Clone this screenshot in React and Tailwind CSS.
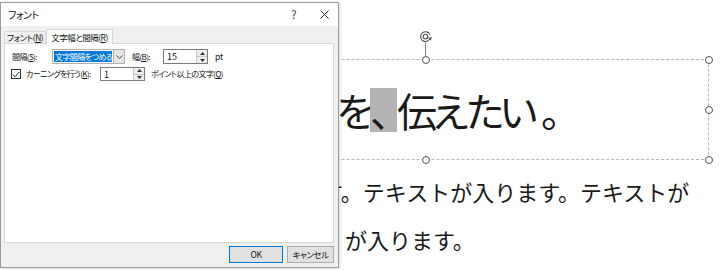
import React from "react";

const jp = "font-['Noto_Sans_CJK_JP','Noto_Sans',sans-serif]";

const Spin = () => (
  <div className="flex flex-col w-[11px] h-full border-l border-[#c8c8c8]">
    <div className="flex-1 flex items-center justify-center bg-[#eeeeee] border-b border-[#c8c8c8]">
      <svg width="5" height="3" viewBox="0 0 5 3">
        <path d="M0 3 L2.5 0 L5 3 Z" fill="#333" />
      </svg>
    </div>
    <div className="flex-1 flex items-center justify-center bg-[#eeeeee]">
      <svg width="5" height="3" viewBox="0 0 5 3">
        <path d="M0 0 L5 0 L2.5 3 Z" fill="#333" />
      </svg>
    </div>
  </div>
);

const Handle = ({ className }) => (
  <div
    className={
      "absolute w-[8px] h-[8px] rounded-full border border-[#505050] bg-white " +
      className
    }
  />
);

const FontDialog = () => (
  <div
    className={
      "absolute left-0 top-[2px] z-10 w-[339px] h-[266px] flex flex-col bg-[#f0f0f0] border border-[#9a9a9a] shadow-[1px_1px_3px_rgba(0,0,0,0.15)] text-[#111] whitespace-nowrap tracking-[-0.5px] [font-feature-settings:'palt'] " +
      jp
    }
  >
    {/* title bar */}
    <div className="h-[23px] bg-white flex items-center pl-[7px] pr-[9px]">
      <span className="text-[10px]">フォント</span>
      <span className="ml-auto text-[11px] text-[#333] mr-[24px]">?</span>
      <svg width="9" height="9" viewBox="0 0 9 9" stroke="#333" strokeWidth="1">
        <path d="M0.5 0.5 L8.5 8.5 M8.5 0.5 L0.5 8.5" />
      </svg>
    </div>

    {/* tabs */}
    <div className="flex items-end h-[17px] pl-[3px] text-[8.5px] leading-none">
      <div className="h-[12px] px-[2px] flex items-center border border-b-0 border-[#d9d9d9] bg-[#f0f0f0]">
        フォント(<span className="underline">N</span>)
      </div>
      <div className="relative -mb-px h-[15px] px-[4px] flex items-center border border-b-0 border-[#d9d9d9] bg-white">
        文字幅と間隔(<span className="underline">R</span>)
      </div>
    </div>

    {/* panel */}
    <div className="ml-[3px] mr-[4px] flex-1 bg-white border border-[#d9d9d9] pt-[5px] pl-[7px] text-[8px] tracking-[-0.6px] leading-none">
      <div className="flex items-center h-[15px]">
        <span className="w-[40px]">
          間隔(<span className="underline">S</span>):
        </span>
        <div className="w-[73px] h-full flex border border-[#b0b0b0] bg-white">
          <span className="flex-1 m-px flex items-center pl-[1px] bg-[#0078d7] text-white">
            文字間隔をつめる
          </span>
          <span className="w-[12px] flex items-center justify-center bg-[#e5e5e5] border-l border-[#b0b0b0]">
            <svg width="7" height="4" viewBox="0 0 7 4" fill="none" stroke="#444" strokeWidth="1">
              <path d="M0.5 0.5 L3.5 3.5 L6.5 0.5" />
            </svg>
          </span>
        </div>
        <span className="ml-[7px] w-[31px]">
          幅(<span className="underline">B</span>):
        </span>
        <div className="w-[45px] h-full flex border border-[#7a7a7a] bg-white">
          <span className="flex-1 flex items-center pl-[3px] text-[9px] tracking-normal">15</span>
          <Spin />
        </div>
        <span className="ml-[7px] text-[8.5px] tracking-normal">pt</span>
      </div>

      <div className="flex items-center h-[14px] mt-[3px]">
        <div className="-ml-[1px] w-[10px] h-[10px] border border-[#333] flex items-center justify-center bg-white">
          <svg width="8" height="7" viewBox="0 0 8 7" fill="none" stroke="#222" strokeWidth="1">
            <path d="M0.8 3.5 L3 5.8 L7.2 1" />
          </svg>
        </div>
        <span className="ml-[5px] w-[74px]">
          カーニングを行う(<span className="underline">K</span>):
        </span>
        <div className="w-[45px] h-full flex border border-[#7a7a7a] bg-white">
          <span className="flex-1 flex items-center pl-[3px] text-[9px] tracking-normal">1</span>
          <Spin />
        </div>
        <span className="ml-[6px]">
          ポイント以上の文字(<span className="underline">Q</span>)
        </span>
      </div>
    </div>

    {/* footer */}
    <div className="h-[24px] flex items-start justify-end pt-[3px] pr-[4px] gap-[4px] text-[8.5px]">
      <button className="w-[54px] h-[17px] bg-[#e1e1e1] border border-[#0078d7] flex items-center justify-center">
        OK
      </button>
      <button className="w-[47px] h-[17px] bg-[#e1e1e1] border border-[#adadad] flex items-center justify-center">
        キャンセル
      </button>
    </div>
  </div>
);

export default function App() {
  return (
    <div className={"relative w-[720px] h-[270px] bg-white overflow-hidden text-[#1a1a1a] " + jp}>
      <FontDialog />

      {/* slide canvas */}
      <div className="pt-[59px]">
        <div className="relative ml-[142px] w-[567px] h-[101px] border border-dashed border-[#b8b8b8] flex items-center">
          {/* rotate handle */}
          <div className="absolute left-[276px] -top-[30px] flex flex-col items-center">
            <svg width="13" height="13" viewBox="0 0 13 13" fill="none" stroke="#505050" strokeWidth="1.1">
              <path d="M11 4.6 A4.9 4.9 0 1 0 11.2 8.2" />
              <circle cx="6.5" cy="6.5" r="2.3" />
              <path d="M9.6 7.4 L11.6 9.4 L12.3 6.8" />
            </svg>
            <div className="w-px h-[13px] bg-[#808080]" />
          </div>
          <Handle className="-top-[4.5px] left-[278.5px]" />
          <Handle className="-top-[4.5px] -right-[4.5px]" />
          <Handle className="top-[45.5px] -right-[4.5px]" />
          <Handle className="-bottom-[4.5px] left-[278.5px]" />
          <Handle className="-bottom-[4.5px] -right-[4.5px]" />

          <div className="pl-[193px] flex items-center text-[40px] leading-none tracking-[-6px]">
            <span>を</span>
            <span className="inline-block h-[44px] leading-[44px] bg-[#b4b4b4] tracking-[-13px]">
              、
            </span>
            <span>伝えたい</span>
            <span className="ml-[8px]">。</span>
          </div>
        </div>

        <div className="mt-[7px] text-[22px] leading-[48px] whitespace-nowrap">
          <div className="pl-[321px]">す。テキストが入ります。テキストが</div>
          <div className="pl-[345px]">が入ります。</div>
        </div>
      </div>
    </div>
  );
}
